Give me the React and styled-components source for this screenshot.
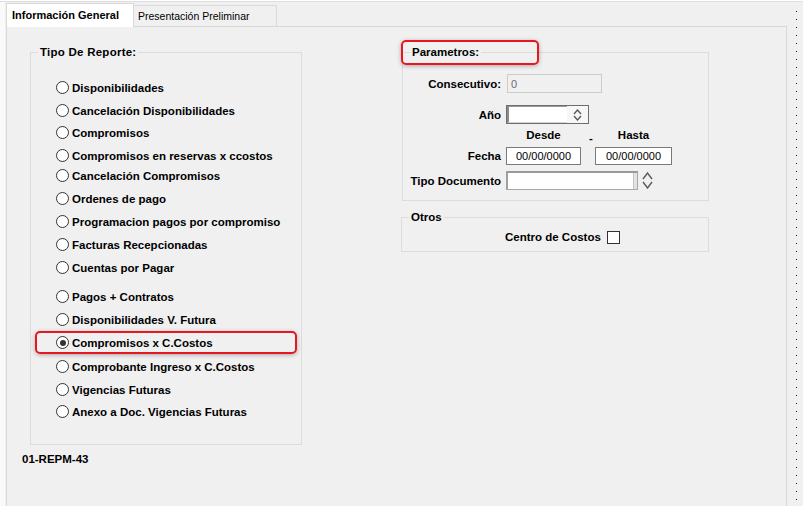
import React from "react";
import styled, { createGlobalStyle } from "styled-components";

const GlobalStyle = createGlobalStyle`
  *, *::before, *::after { box-sizing: border-box; }
  html, body { margin: 0; background: #fff; }
  body {
    font-family: "Liberation Sans", Arial, sans-serif;
    color: #000;
  }
`;

const reportTypes = [
  { label: "Disponibilidades" },
  { label: "Cancelación Disponibilidades" },
  { label: "Compromisos", shift: -1 },
  { label: "Compromisos en reservas x ccostos" },
  { label: "Cancelación Compromisos", shift: -3 },
  { label: "Ordenes de pago" },
  { label: "Programacion pagos por compromiso" },
  { label: "Facturas Recepcionadas" },
  { label: "Cuentas por Pagar" },
  { label: "Pagos + Contratos", shift: 6 },
  { label: "Disponibilidades V. Futura" },
  { label: "Compromisos x C.Costos", checked: true },
  { label: "Comprobante Ingreso x C.Costos", shift: 1 },
  { label: "Vigencias Futuras" },
  { label: "Anexo a Doc. Vigencias Futuras", shift: -1 },
];

const Window = styled.div`
  display: flex;
  height: 505px;
  margin-top: 1px;
  border-top: 1px solid #dedede;
  background: #f0f0f0;
`;

const Main = styled.div`
  display: flex;
  flex-direction: column;
  width: 787px;
  padding-left: 6px;
  border-left: 1px solid #d6d6d6;
  margin-left: -1px;
  background: linear-gradient(to right, #fafafa 5px, transparent 5px);
`;

const TabStrip = styled.div`
  display: flex;
  align-items: flex-end;
  height: 24px;
  flex-shrink: 0;
`;

const Tab = styled.div`
  position: relative;
  z-index: ${({ $active }) => ($active ? 1 : 0)};
  display: flex;
  align-items: center;
  width: ${({ $active }) => ($active ? "128px" : "143px")};
  height: ${({ $active }) => ($active ? "24px" : "21px")};
  margin-bottom: ${({ $active }) => ($active ? "-1px" : "0")};
  padding-left: ${({ $active }) => ($active ? "5px" : "4px")};
  padding-bottom: ${({ $active }) => ($active ? "2px" : "1px")};
  border: 1px solid #d9d9d9;
  border-bottom: none;
  border-left: ${({ $active }) => ($active ? "1px solid #d9d9d9" : "none")};
  background: ${({ $active }) => ($active ? "#fff" : "#f0f0f0")};
  font-size: ${({ $active }) => ($active ? "11px" : "10.5px")};
  font-weight: ${({ $active }) => ($active ? 700 : 400)};
  white-space: nowrap;
`;

const Panel = styled.div`
  display: flex;
  flex: 1;
  width: 781px;
  padding: 18px 0 0 15px;
  border: 1px solid #d9d9d9;
  border-bottom: none;
  background: #f0f0f0;
  font-size: 11.5px;
  font-weight: 700;
  line-height: 14px;
`;

const DotColumn = styled.div`
  width: 1px;
  margin-left: 10px;
  background: repeating-linear-gradient(
    to bottom,
    #222 0 1px,
    transparent 1px 8px
  );
  background-position: 0 9px;
  background-repeat: no-repeat;
  background-size: 1px 100%;
`;

const LeftColumn = styled.div`
  display: flex;
  flex-direction: column;
  width: 280px;
`;

const RightColumn = styled.div`
  display: flex;
  flex-direction: column;
  margin-left: 99px;
`;

const GroupBox = styled.fieldset`
  position: relative;
  width: ${({ $w }) => $w}px;
  height: ${({ $h }) => $h}px;
  margin: ${({ $m }) => $m || "0"};
  padding: 0;
  border: 1px solid #dcdcdc;
  min-width: 0;
`;

const Legend = styled.legend`
  position: relative;
  margin-left: 7px;
  padding: 0 2px;
  line-height: 14px;
  font-size: 11.5px;
  font-weight: 700;
  letter-spacing: ${({ $spread }) => ($spread ? "0.25px" : "0")};
`;

const Mark = styled.span`
  position: absolute;
  left: ${({ $x }) => $x}px;
  top: ${({ $y }) => $y}px;
  width: ${({ $w }) => $w}px;
  height: ${({ $h }) => $h}px;
  border: 2px solid #e8161e;
  border-radius: 5px;
  box-shadow: 0 1px 4px rgba(0, 0, 0, 0.3);
  pointer-events: none;
`;

const RadioList = styled.div`
  display: flex;
  flex-direction: column;
  padding-top: 17px;
`;

const RadioRow = styled.label`
  display: flex;
  align-items: center;
  gap: 3px;
  width: 262px;
  height: 23px;
  margin-left: 4px;
  margin-top: ${({ $shift }) => $shift || 0}px;
  padding-left: 19px;
  border: 2px solid ${({ $marked }) => ($marked ? "#e8161e" : "transparent")};
  border-radius: 5px;
  box-shadow: ${({ $marked }) =>
    $marked ? "0 1px 4px rgba(0, 0, 0, 0.3)" : "none"};
  white-space: nowrap;
`;

const Radio = styled.span`
  display: flex;
  align-items: center;
  justify-content: center;
  width: 13px;
  height: 13px;
  border: 1px solid #333;
  border-radius: 50%;
  background: #fff;
  flex-shrink: 0;

  &::after {
    content: "";
    display: ${({ $on }) => ($on ? "block" : "none")};
    width: 6px;
    height: 6px;
    border-radius: 50%;
    background: #333;
  }
`;

const ReportCode = styled.div`
  margin-top: 7px;
`;

const FieldRow = styled.div`
  display: flex;
  align-items: center;
  height: ${({ $h }) => $h || 19}px;
  margin-top: ${({ $top }) => $top}px;
`;

const FieldLabel = styled.span`
  width: 103px;
  padding-right: 5px;
  text-align: right;
  white-space: nowrap;
`;

const TextBox = styled.div`
  display: flex;
  align-items: center;
  justify-content: ${({ $center }) => ($center ? "center" : "flex-start")};
  width: ${({ $w }) => $w}px;
  height: ${({ $h }) => $h || 19}px;
  margin-left: ${({ $ml }) => $ml || 0}px;
  padding-left: ${({ $center }) => ($center ? 0 : 3)}px;
  border: 1px solid ${({ $disabled }) => ($disabled ? "#cccccc" : "#7a7a7a")};
  background: ${({ $disabled }) => ($disabled ? "#f0f0f0" : "#fff")};
  color: ${({ $disabled }) => ($disabled ? "#6d6d6d" : "#000")};
  font-size: 11px;
  font-weight: 400;
`;

const SpinBox = styled.div`
  display: flex;
  width: 83px;
  height: 19px;
  border: 1px solid #6e6e6e;
  background: #fff;
`;

const SpinField = styled.div`
  width: 60px;
  border-top: 1px solid #9a9a9a;
  border-left: 2px solid #8a8a8a;
  border-bottom: 1px solid #d2d2d2;
  background: #fff;
`;

const SpinButtons = styled.div`
  display: flex;
  flex: 1;
  align-items: center;
  justify-content: center;
  background: #f7f7f7;
`;

const Combo = styled.div`
  display: flex;
  justify-content: flex-end;
  width: 132px;
  height: 19px;
  border: 1px solid #a8a8a8;
  border-top: 2px solid #9a9a9a;
  border-left: 2px solid #a0a0a0;
  background: #fff;
`;

const ComboButton = styled.span`
  width: 4px;
  background: #e3e3e3;
  border-left: 1px solid #c4c4c4;
`;

const ComboSpin = styled.span`
  display: flex;
  margin-left: 4px;
`;

const HeaderCell = styled.span`
  width: ${({ $w }) => $w}px;
  text-align: ${({ $align }) => $align || "center"};
  padding-left: ${({ $pl }) => $pl || 0}px;
  padding-top: ${({ $pt }) => $pt || 0}px;
`;

const CheckRow = styled.div`
  display: flex;
  align-items: center;
  gap: 6px;
  margin-top: 6px;
  padding-left: 103px;
`;

const CheckBox = styled.span`
  width: 13px;
  height: 13px;
  border: 1px solid #333;
  background: #fff;
`;

const Chevrons = ({ w, h, gap }) => (
  <svg width={w} height={h} viewBox={`0 0 ${w} ${h}`}>
    <polyline
      points={`1,${h / 2 - gap / 2} ${w / 2},1 ${w - 1},${h / 2 - gap / 2}`}
      fill="none"
      stroke="#5a5a5a"
      strokeWidth="1.4"
    />
    <polyline
      points={`1,${h / 2 + gap / 2} ${w / 2},${h - 1} ${w - 1},${h / 2 + gap / 2}`}
      fill="none"
      stroke="#5a5a5a"
      strokeWidth="1.4"
    />
  </svg>
);

const ReportTypeGroup = () => (
  <GroupBox $w={272} $h={400} $m="0 0 0 8px">
    <Legend $spread>Tipo De Reporte:</Legend>
    <RadioList>
      {reportTypes.map((item) => (
        <RadioRow key={item.label} $shift={item.shift} $marked={item.checked}>
          <Radio $on={item.checked} />
          {item.label}
        </RadioRow>
      ))}
    </RadioList>
  </GroupBox>
);

const ParametersGroup = () => (
  <GroupBox $w={307} $h={156} $m="0 0 0 1px">
    <Legend>
      <Mark $x={-9} $y={-5} $w={138} $h={25} />
      Parametros:
    </Legend>
    <FieldRow $top={15}>
      <FieldLabel>Consecutivo:</FieldLabel>
      <TextBox $w={95} $ml={1} $disabled>
        0
      </TextBox>
    </FieldRow>
    <FieldRow $top={12}>
      <FieldLabel>Año</FieldLabel>
      <SpinBox>
        <SpinField />
        <SpinButtons>
          <Chevrons w={9} h={12} gap={2} />
        </SpinButtons>
      </SpinBox>
    </FieldRow>
    <FieldRow $top={4} $h={14}>
      <HeaderCell $w={103} />
      <HeaderCell $w={75}>Desde</HeaderCell>
      <HeaderCell $w={14} $align="left" $pl={8} $pt={6}>
        -
      </HeaderCell>
      <HeaderCell $w={77}>Hasta</HeaderCell>
    </FieldRow>
    <FieldRow $top={5} $h={18}>
      <FieldLabel>Fecha</FieldLabel>
      <TextBox $w={75} $h={18} $center>
        00/00/0000
      </TextBox>
      <TextBox $w={77} $h={18} $ml={14} $center>
        00/00/0000
      </TextBox>
    </FieldRow>
    <FieldRow $top={6}>
      <FieldLabel>Tipo Documento</FieldLabel>
      <Combo>
        <ComboButton />
      </Combo>
      <ComboSpin>
        <Chevrons w={11} h={17} gap={3} />
      </ComboSpin>
    </FieldRow>
  </GroupBox>
);

const OthersGroup = () => (
  <GroupBox $w={308} $h={42} $m="9px 0 0 0">
    <Legend>Otros</Legend>
    <CheckRow>
      Centro de Costos
      <CheckBox />
    </CheckRow>
  </GroupBox>
);

export default function App() {
  return (
    <>
      <GlobalStyle />
      <Window>
        <Main>
          <TabStrip>
            <Tab $active>Información General</Tab>
            <Tab>Presentación Preliminar</Tab>
          </TabStrip>
          <Panel>
            <LeftColumn>
              <ReportTypeGroup />
              <ReportCode>01-REPM-43</ReportCode>
            </LeftColumn>
            <RightColumn>
              <ParametersGroup />
              <OthersGroup />
            </RightColumn>
          </Panel>
        </Main>
        <DotColumn />
      </Window>
    </>
  );
}
